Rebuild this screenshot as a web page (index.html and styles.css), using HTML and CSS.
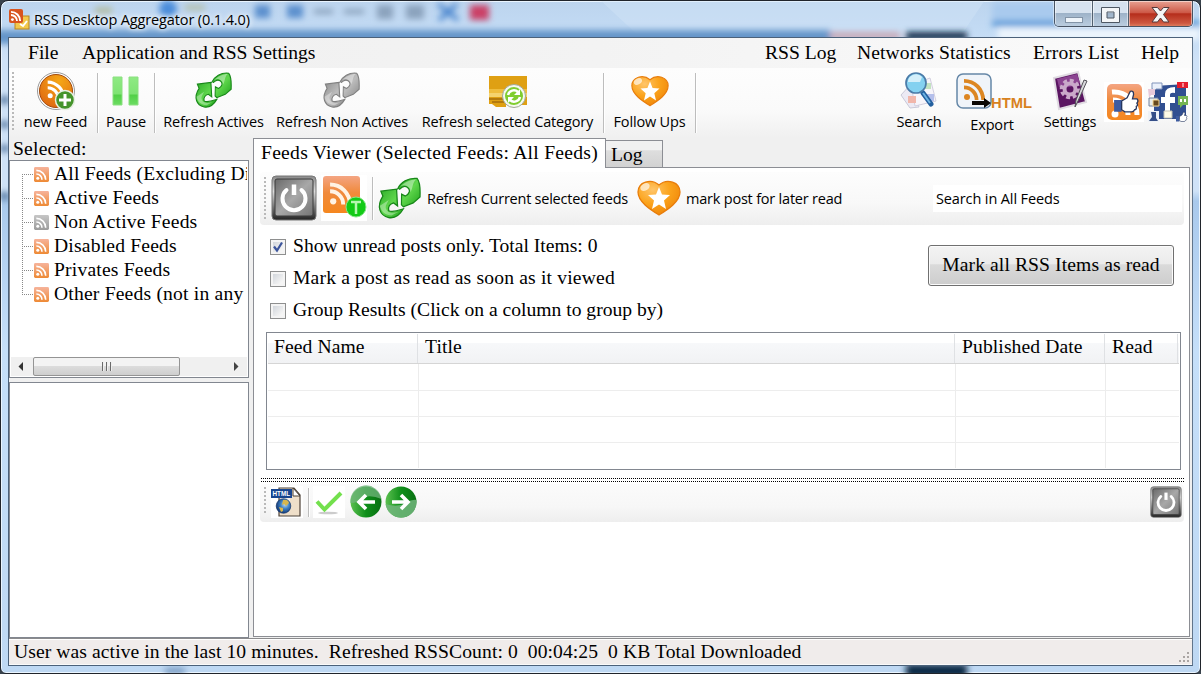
FILE: index.html
```html
<!DOCTYPE html>
<html lang="en">
<head>
<meta charset="utf-8">
<title>RSS Desktop Aggregator (0.1.4.0)</title>
<link rel="stylesheet" href="styles.css">
</head>
<body>
<svg class="defs" width="0" height="0" aria-hidden="true">
  <defs>
    <linearGradient id="gGreen" x1="0" y1="0" x2="1" y2="1"><stop offset="0" stop-color="#2fae2a"/><stop offset=".5" stop-color="#5fd64c"/><stop offset="1" stop-color="#20a51c"/></linearGradient>
    <linearGradient id="gGrey" x1="0" y1="0" x2="1" y2="1"><stop offset="0" stop-color="#909090"/><stop offset=".5" stop-color="#bcbcbc"/><stop offset="1" stop-color="#8c8c8c"/></linearGradient>
    <linearGradient id="gOrange" x1="0" y1="0" x2="0" y2="1"><stop offset="0" stop-color="#f4a583"/><stop offset=".45" stop-color="#f08a3c"/><stop offset="1" stop-color="#f5871f"/></linearGradient>
    <linearGradient id="gTree" x1="0" y1="0" x2="0" y2="1"><stop offset="0" stop-color="#f6b39b"/><stop offset="1" stop-color="#ee8a35"/></linearGradient>
    <linearGradient id="gTreeGrey" x1="0" y1="0" x2="0" y2="1"><stop offset="0" stop-color="#c6c6c6"/><stop offset="1" stop-color="#9c9c9c"/></linearGradient>
    <linearGradient id="gMetal" x1="0" y1="0" x2="1" y2="1"><stop offset="0" stop-color="#6a6a6a"/><stop offset=".5" stop-color="#a8a8a8"/><stop offset="1" stop-color="#747474"/></linearGradient>
    <linearGradient id="gRim" x1="0" y1="0" x2="0" y2="1"><stop offset="0" stop-color="#888"/><stop offset=".35" stop-color="#ddd"/><stop offset=".7" stop-color="#777"/><stop offset="1" stop-color="#222"/></linearGradient>
    <radialGradient id="gHeart" cx=".35" cy=".25" r=".8"><stop offset="0" stop-color="#ffc56a"/><stop offset=".5" stop-color="#fba41d"/><stop offset="1" stop-color="#ef8508"/></radialGradient>
    <linearGradient id="gPause" x1="0" y1="0" x2="0" y2="1"><stop offset="0" stop-color="#8fea84"/><stop offset=".6" stop-color="#7fe373"/><stop offset=".65" stop-color="#52d047"/><stop offset="1" stop-color="#6cdc62"/></linearGradient>
    <linearGradient id="gBall" x1="0" y1="0" x2="1" y2="0"><stop offset="0" stop-color="#5cc050"/><stop offset=".5" stop-color="#0f8f1a"/><stop offset="1" stop-color="#087012"/></linearGradient>
    <radialGradient id="gGlobe" cx=".6" cy=".4" r=".6"><stop offset="0" stop-color="#b8dcf5"/><stop offset=".5" stop-color="#3c7fc2"/><stop offset="1" stop-color="#143a78"/></radialGradient>
    <radialGradient id="gRound" cx=".6" cy=".2" r=".9"><stop offset="0" stop-color="#f5a716"/><stop offset="1" stop-color="#de6410"/></radialGradient>
    <symbol id="waves" viewBox="0 0 20 20">
      <circle cx="4" cy="16" r="2.4"/><path d="M1.6 9.8v-3A11.6 11.6 0 0 1 13.2 18.4h-3A8.6 8.6 0 0 0 1.6 9.8zM1.6 4.600V1.500A16.900 16.900 0 0 1 18.500 18.400h-3.100A13.800 13.800 0 0 0 1.600 4.600z"/>
    </symbol>
    <symbol id="swirl" viewBox="0 0 45 45">
      <path d="M21 13C24 6 32 1 41 2C45 7 44 16 44 21L37 27L27 31L25 29L25 18L29 20C33 18 35 14 31 11C28 9 25 11 23 13z"/>
      <path d="M24 10C28 6 34 3 40 3C36 6 37 12 34 16C35 12 31 9 27 9z" fill="#fff" fill-opacity=".4" stroke="none"/>
      <path d="M4 15L20 13L21 30L17 27C13 28 11 31 12 35C16 37 21 35 27 33C23 40 18 43 12 42C3 40 -1 31 6 20z"/>
      <path d="M3 30C4 36 9 40 15 40L22 36C14 39 8 36 9 30L12 24z" fill="#fff" fill-opacity=".35" stroke="none"/>
      <path d="M21.500 13L24 17L23 31" fill="none" stroke="#fff" stroke-width="1.200"/>
    </symbol>
    <symbol id="heart" viewBox="0 0 44 36">
      <path d="M22 35C14 30 1 22 1 12C1 2 14-2 22 5C30-2 43 2 43 12C43 22 30 30 22 35z" fill="url(#gHeart)" stroke="#e87d0c" stroke-width="1.300"/>
      <ellipse cx="8" cy="7" rx="5" ry="3.500" fill="#fff" opacity=".65" transform="rotate(-30 8 7)"/>
      <path d="M22 7L25 14.500L33 15L27 20.500L29 29L22 24.500L15 29L17 20.500L11 15L19 14.500z" fill="#fff"/>
    </symbol>
    <symbol id="power" viewBox="0 0 46 46">
      <rect x="1" y="1" width="44" height="44" rx="4" fill="url(#gRim)" stroke="#777"/>
      <rect x="4" y="4" width="38" height="37" rx="2" fill="url(#gMetal)" stroke="#3b3b3b"/>
      <path d="M15.500 15A11.500 11.500 0 1 0 30.500 15" fill="none" stroke="#fff" stroke-width="4" stroke-linecap="round"/>
      <path d="M23 9.500V20" stroke="#fff" stroke-width="4.500"/>
    </symbol>
    <symbol id="feed" viewBox="0 0 16 16">
      <rect width="16" height="16" rx="1.500"/>
      <g fill="none" stroke="#fff" stroke-width="1.700"><path d="M2.500 7.500A6 6 0 0 1 8.500 13.500M2.500 3.600A10 10 0 0 1 12.500 13.500"/></g><circle cx="4" cy="12" r="1.600" fill="#fff"/>
    </symbol>
    <symbol id="hand" viewBox="0 0 24 22">
      <path d="M1 10H8V21H1z" fill="#3d5ba0"/><path d="M8 11L13 8L16 2Q19 1 19 5L18 9H22Q24 11 22 13Q23.500 15 21.500 16Q22 19 20 19Q19 21 17 21H11L8 19z" fill="#fff" stroke="#26375f" stroke-width="1.200"/>
    </symbol>
  </defs>
</svg>

<div class="window">
  <svg class="glass" viewBox="0 0 1201 674" aria-hidden="true">
    <defs><filter id="soft" x="-5%" y="-50%" width="110%" height="200%"><feGaussianBlur stdDeviation="3"/></filter></defs>
    <path d="M600 0H985L960 37H640z" fill="#d4e5f8" opacity=".4"/>
    <g filter="url(#soft)">
      <path d="M-20 30H830V44H-20z" fill="#6595c9"/>
      <path d="M830 32H900V40H830z" fill="#c7a9b7"/>
      <path d="M906 32H967V40H906z" fill="#0d2947"/>
      <path d="M992 2H1060V22H992z" fill="#a9caee"/><path d="M992 21H1200V26H992z" fill="#3e90d4"/><path d="M998 28H1200V40H998z" fill="#edf5fd"/>
      <circle cx="168" cy="9" r="9" fill="#4b8ddb"/><path d="M95 7H112V14H95zM185 5h20v5h-20z" fill="#b3bda4"/>
      <path d="M255 5H270V18H255zM287 5H303V18H287z" fill="#5b90ce"/>
      <path d="M314 9H333V14H314zM344 9H364V14H344zM377 5H393V19H377zM406 5H424V19H406z" fill="#8ba3bd"/>
      <path d="M438 4L458 20M457 4L439 20" stroke="#3f7fcb" stroke-width="4"/>
      <path d="M470 5H489V20H470z" fill="#cb3f66"/>
      <path d="M0 96h9v8H0zM0 121h9v7H0zM0 145h9v7H0zM0 192h9v8H0z" fill="#5b7da4"/>
      <path d="M906 664H967V678H906z" fill="#0d2947"/><path d="M165 668h20v6h-20z" fill="#7596bd"/>
    </g>
  </svg>

  <header class="titlebar">
    <svg class="app-icon" viewBox="0 0 21 21"><rect x="6" y="7" width="14" height="13" fill="#f2c94c" stroke="#b98620"/><path d="M11 15l3 2 4-5" fill="none" stroke="#fff" stroke-width="2"/><rect width="14" height="14" rx="2" fill="#d8541f"/><use href="#waves" x="1" y="1" width="12" height="12" fill="#fff"/></svg>
    <h1 class="caption">RSS Desktop Aggregator (0.1.4.0)</h1>
    <div class="controls">
      <span class="control minimize"><svg viewBox="0 0 38 26"><rect x="10.500" y="16.500" width="17" height="5" fill="#eef4fa" stroke="#8394a7"/></svg></span>
      <span class="control maximize"><svg viewBox="0 0 36 26"><path d="M8.500 6.500h18v15h-18zM14 11v6h7v-6z" fill="#f4f6f8" fill-rule="evenodd" stroke="#4e5864"/></svg></span>
      <span class="control close"><svg viewBox="0 0 62 26"><path d="M23 6.500h5.500L31.500 10l3-3.500H40L34.500 13.500L40 21h-5.500l-3-4-3 4H23l5.500-7.500z" fill="#f5f5f5" stroke="#55393b"/></svg></span>
    </div>
  </header>

  <main class="client">
    <nav class="menu">
      <span class="m-file">File</span><span class="m-app">Application and RSS Settings</span>
      <span class="m-log">RSS Log</span><span class="m-net">Networks Statistics</span><span class="m-err">Errors List</span><span class="m-help">Help</span>
    </nav>

    <div class="toolbar">
      <i class="grip"></i>
      <button class="tool t-new"><svg viewBox="0 0 40 40"><circle cx="20" cy="20" r="18.500" fill="#fff" stroke="#999"/><circle cx="20" cy="20" r="16.500" fill="url(#gRound)" stroke="#a34a0d"/><use href="#waves" x="10" y="8" width="21" height="21" fill="#fff"/><circle cx="29" cy="29" r="9.500" fill="#45942b" stroke="#e7efe2" stroke-width="1.500"/><path d="M29 23v12M23 29h12" stroke="#fff" stroke-width="3"/></svg><span>new Feed</span></button>
      <i class="sep"></i>
      <button class="tool t-pause"><svg viewBox="0 0 40 40"><path d="M7 6h9v28H7zM23 6h9v28h-9z" fill="url(#gPause)" stroke="#8be080"/></svg><span>Pause</span></button>
      <i class="sep"></i>
      <button class="tool t-act"><svg viewBox="0 0 40 40" fill="url(#gGreen)" stroke="#188719" stroke-width="1.300"><use href="#swirl" x="0" y="0" width="38" height="39"/></svg><span>Refresh Actives</span></button>
      <button class="tool t-non"><svg viewBox="0 0 40 40" fill="url(#gGrey)" stroke="#808080" stroke-width="1.300"><use href="#swirl" x="0" y="0" width="38" height="39"/></svg><span>Refresh Non Actives</span></button>
      <button class="tool t-cat"><svg viewBox="0 0 40 40"><path d="M1 5H39V34H18V36H8L4 33H1z" fill="#dfa013"/><path d="M1 18H39V25H1z" fill="#efbd3d"/><path d="M1 22H39V26H1z" fill="#f5d36e"/><path d="M1 28H22M4 31H20" stroke="#a66d0c" stroke-width="1.500"/><circle cx="26" cy="25" r="11.500" fill="#f5f9ef" stroke="#a1a796"/><circle cx="26" cy="25" r="9" fill="#80cd30"/><path d="M20 24a6 6 0 0 1 10-3M32 26a6 6 0 0 1-10 3" fill="none" stroke="#fff" stroke-width="2.500"/><path d="M32 18v6h-6zM20 32v-6h6z" fill="#fff"/></svg><span>Refresh selected Category</span></button>
      <i class="sep"></i>
      <button class="tool t-follow"><svg viewBox="0 0 40 40"><use href="#heart" x="1" y="4" width="38" height="32"/></svg><span>Follow Ups</span></button>
      <i class="sep"></i>
      <button class="tool t-search"><svg viewBox="0 0 40 40"><path d="M2 24L12 13L20 36L11 37z" fill="#eceaf4" stroke="#c9c9d8"/><path d="M12 14L31 7L37 30L16 35z" fill="#f7f5fa" stroke="#d2cfdf"/><path d="M9 25h8v7H9z" fill="#f1b6aa"/><path d="M24 12h8v6h-8z" fill="#c3e3c0"/><path d="M28 23h7v7h-7z" fill="#b4bfeb"/><path d="M24 22l8 11" stroke="#235f9e" stroke-width="5" stroke-linecap="round"/><path d="M24 22l7 10" stroke="#6eb2e2" stroke-width="2"/><circle cx="17" cy="12" r="10" fill="#84d1f0" stroke="#4b7ba8" stroke-width="1.700"/><path d="M9 11a8 8 0 0 1 14-5l-2 5z" fill="#fff" opacity=".65"/></svg><span>Search</span></button>
      <button class="tool t-export"><svg viewBox="0 0 77 37"><rect x="1" y="1" width="34" height="34" rx="6" fill="#f0f4f9" stroke="#6587a7" stroke-width="1.500"/><use href="#waves" x="6" y="4" width="25" height="25" fill="#dc8622"/><path d="M16 28H28V25L35 30L28 35V32H16z" fill="#0b0703"/><text class="html-word" x="35" y="34.500" textLength="41" lengthAdjust="spacingAndGlyphs">HTML</text></svg><span>Export</span></button>
      <button class="tool t-settings"><svg viewBox="0 0 40 40"><path d="M4 7L28 1L36 31L9 38z" fill="#5b1562" stroke="#e0dce2" stroke-width="2"/><path d="M7 8L27 3L30 12Q18 18 9 16z" fill="#8b4491"/><circle cx="20" cy="18" r="8" fill="none" stroke="#caa9ca" stroke-width="4.500" stroke-dasharray="3.700 2.500"/><circle cx="20" cy="18" r="5.500" fill="none" stroke="#caa9ca" stroke-width="4"/><path d="M37 10L28 30L25 36L26 29L34 9z" fill="#d9d9dc" stroke="#525057"/></svg><span>Settings</span></button>
      <button class="picture t-like"><svg viewBox="0 0 40 40"><path d="M0 0h40v40H0z" fill="#fff"/><rect x="3" y="2" width="35" height="36" rx="5" fill="url(#gOrange)"/><path d="M8 10A23 23 0 0 1 33 33M9 18A15 15 0 0 1 24 33" stroke="#fff" stroke-width="5" fill="none"/><circle cx="11" cy="32" r="3.500" fill="#fff"/><use href="#hand" x="9" y="7" width="26" height="24"/></svg></button>
      <button class="picture t-social"><svg viewBox="0 0 40 40"><path d="M6 4L38 2V37H6z" fill="#314f91"/><path d="M17 34V21H13V15H17V12Q17 5 27 5V11Q22 10 22 13V15H27V21H22V34z" fill="#fff"/><path d="M4 1h10v6H8l-3 3V7H4z" fill="#eaf0fa" stroke="#8093ba"/><path d="M0 7h7v6H3l-2 3z" fill="#e7c9d9"/><path d="M29 0h11v6H29z" fill="#e51d2d"/><path d="M35 1v4" stroke="#fff"/><path d="M30 14h10v9h-5l-3 3v-3h-2z" fill="#75b553"/><path d="M33 17v3M37 17v3" stroke="#fff" stroke-width="2"/><path d="M1 16h9v8H1z" fill="#e8ece9" stroke="#7180a0"/><path d="M5 18h6v6H5z" fill="#66491e" stroke="#f7d993"/><path d="M0 29h11v11H0z" fill="#eef2f7"/><path d="M3 30h5v6l2 3H1l3-4z" fill="#354f88"/><path d="M16 29h8v7h-8z" fill="#fffbe6" stroke="#c3c2b6"/><use href="#hand" x="27" y="29" width="13" height="11"/></svg></button>
    </div>

    <div class="workspace">
      <aside class="sidebar">
        <h2 class="selected">Selected:</h2>
        <section class="tree-box">
          <ul class="tree">
            <li><svg class="leaf" fill="url(#gTree)"><use href="#feed"/></svg><span>All Feeds (Excluding Disabled)</span></li>
            <li><svg class="leaf" fill="url(#gTree)"><use href="#feed"/></svg><span>Active Feeds</span></li>
            <li><svg class="leaf" fill="url(#gTreeGrey)"><use href="#feed"/></svg><span>Non Active Feeds</span></li>
            <li><svg class="leaf" fill="url(#gTree)"><use href="#feed"/></svg><span>Disabled Feeds</span></li>
            <li><svg class="leaf" fill="url(#gTree)"><use href="#feed"/></svg><span>Privates Feeds</span></li>
            <li><svg class="leaf" fill="url(#gTree)"><use href="#feed"/></svg><span>Other Feeds (not in any category)</span></li>
          </ul>
          <div class="scrollbar">
            <svg class="arrow" viewBox="0 0 22 19"><path d="M12 5v9L7.500 9.500z" fill="#333"/></svg>
            <div class="thumb"><i></i><i></i><i></i></div>
            <svg class="arrow last" viewBox="0 0 22 19"><path d="M9 5v9l4.500-4.500z" fill="#444"/></svg>
          </div>
        </section>
        <section class="detail-box"></section>
      </aside>

      <section class="tabs">
        <div class="tab-row"><span class="tab active">Feeds Viewer (Selected Feeds: All Feeds)</span><span class="tab">Log</span></div>
        <div class="page">
          <div class="feedbar">
            <i class="grip"></i>
            <svg class="f-power"><use href="#power"/></svg>
            <svg class="f-rss" viewBox="0 0 46 46"><path d="M0 0h46v46H0z" fill="#fff"/><rect x="2" y="1" width="37" height="37" rx="3" fill="url(#gOrange)"/><use href="#waves" x="7" y="5" width="26" height="27" fill="#fff3e4"/><circle cx="35" cy="32" r="10" fill="#12ca16" stroke="#86e58a"/><path d="M30 27h10M35 27v12" stroke="#b5f7b0" stroke-width="2.500"/></svg>
            <i class="sep"></i>
            <svg class="f-swirl" fill="url(#gGreen)" stroke="#188719" stroke-width="1.300"><use href="#swirl"/></svg>
            <span class="f-refresh">Refresh Current selected feeds</span>
            <svg class="f-heart"><use href="#heart"/></svg>
            <span class="f-mark">mark post for later read</span>
            <div class="search">Search in All Feeds</div>
          </div>

          <div class="options">
            <div class="checks">
              <label><i class="box"><svg viewBox="0 0 14 14"><path d="M3 6.500L6 10.500L11 2.500" fill="none" stroke="#3c559c" stroke-width="2.200"/></svg></i><span class="c1">Show unread posts only. Total Items: 0</span></label>
              <label><i class="box"></i><span class="c2">Mark a post as read as soon as it viewed</span></label>
              <label><i class="box"></i><span class="c3">Group Results (Click on a column to group by)</span></label>
            </div>
            <button class="mark-all">Mark all RSS Items as read</button>
          </div>

          <div class="grid">
            <div class="grid-head"><span>Feed Name</span><span>Title</span><span>Published Date</span><span>Read</span></div>
            <div class="grid-row"><i></i><i></i><i></i><i></i></div>
            <div class="grid-row"><i></i><i></i><i></i><i></i></div>
            <div class="grid-row"><i></i><i></i><i></i><i></i></div>
            <div class="grid-row"><i></i><i></i><i></i><i></i></div>
          </div>
          <div class="splitter"></div>

          <div class="postbar">
            <i class="grip"></i>
            <svg class="p-html" viewBox="0 0 32 32"><path d="M0 0h32v32H0z" fill="#fff"/><path d="M8 2h15l6 7v21H8z" fill="#efdfc9" stroke="#4d4238" stroke-width="1.200"/><path d="M9 3h10v20H9z" fill="#fff" opacity=".6"/><path d="M22 2v8h7z" fill="#fff" stroke="#4d4238"/><path d="M0 3h21v9H0z" fill="#174590"/><text class="html-tag" x="1.500" y="10" textLength="17.500" lengthAdjust="spacingAndGlyphs">HTML</text><circle cx="12.500" cy="20" r="7.300" fill="url(#gGlobe)" stroke="#173768" stroke-width=".7"/><path d="M12 14q5-1 6 3l-3 3-2-2-2 1zM8 21l4 1v3l-2 1z" fill="#d7b74d"/></svg>
            <i class="sep"></i>
            <svg class="p-check" viewBox="0 0 32 32"><path d="M0 0h32v32H0z" fill="#fff"/><ellipse cx="15" cy="27" rx="10" ry="1.300" fill="#ccc"/><path d="M4 15.500L11.500 23.500L28 7" fill="none" stroke="#73e04d" stroke-width="4"/></svg>
            <svg class="p-prev" viewBox="0 0 32 32"><circle cx="16" cy="16" r="15.500" fill="url(#gBall)"/><path d="M.5 17A15.500 15.500 0 0 1 31.500 13Q20 8 12 12Q8 17 .5 17z" fill="#72b67c" opacity=".75"/><path d="M25 16H10M16 9L9 16L16 23" fill="none" stroke="#fff" stroke-width="3.600"/></svg>
            <svg class="p-next" viewBox="0 0 32 32"><circle cx="16" cy="16" r="15.500" fill="url(#gBall)"/><path d="M.5 18Q12 22 21 17Q27 13 31.500 14A15.500 15.500 0 0 1 .5 18z" fill="#72b67c" opacity=".85"/><path d="M7 16H22M16 9L23 16L16 23" fill="none" stroke="#fff" stroke-width="3.600"/></svg>
            <svg class="p-power"><use href="#power"/></svg>
          </div>
        </div>
      </section>
    </div>

    <footer class="status"><span>User was active in the last 10 minutes.&nbsp; Refreshed RSSCount: 0&nbsp; 00:04:25&nbsp; 0 KB Total Downloaded</span>
      <svg class="sizer" viewBox="0 0 11 11"><path d="M8 0h2v2H8zM4 4h2v2H4zM8 4h2v2H8zM0 8h2v2H0zM4 8h2v2H4zM8 8h2v2H8z" fill="#aaa5a3"/></svg>
    </footer>
  </main>
</div>
</body>
</html>
```
FILE: styles.css
```css
* { box-sizing: border-box; }
body { margin: 0; overflow: hidden; background: #39434d; color: #000; font: 19.600px/24px "Liberation Serif", serif; }
.defs { position: absolute; }
svg { display: block; flex: none; overflow: visible; }
h1, h2, ul { margin: 0; padding: 0; font: inherit; }
button { font: inherit; color: inherit; padding: 0; border: 0; background: none; }
span, .search, .caption, .mark-all { white-space: nowrap; }

.window { position: relative; width: 1201px; height: 674px; padding: 0 8px; border: 1px solid #20242b; border-radius: 8px 8px 6px 6px; overflow: hidden; background: linear-gradient(#bcd4ee, #c3dbf4 30px, #cfe2f7 60px, #cfe2f7 190px, #a9c9ec 200px, #c5dff9 350px, #bed8f3); box-shadow: inset 0 0 0 1px #eaf5ff; display: flex; flex-direction: column; }
.glass { position: absolute; left: -1px; top: -1px; width: 1201px; height: 674px; }

.titlebar { position: relative; height: 36px; flex: none; display: flex; align-items: flex-start; }
.app-icon { width: 21px; height: 21px; margin-top: 8px; }
.caption { margin: 7px 0 0 4px; font: 14.500px/23px "Open Sans", sans-serif; letter-spacing: -.130px; text-shadow: 0 0 7px #fff, 0 0 5px #fff; }
.controls { display: flex; margin: 0 -1px 0 auto; height: 26px; border: 1px solid #485363; border-top: 0; border-radius: 0 0 5px 5px; overflow: hidden; box-shadow: 0 0 0 1px #e6f0fa99; }
.control { height: 26px; border-right: 1px solid #52606f; background: linear-gradient(#d6e2ef 0 45%, #9db2c8 47%, #bdcfe1); box-shadow: inset 0 0 0 1px #ffffff80; }
.minimize { width: 38px; }
.maximize { width: 36px; }
.close { width: 63px; border: 0; background: linear-gradient(#e8a192, #cc5745 46%, #b52d1b 49%, #cd5740 85%, #e28765); }
.control svg { height: 26px; }

.client { position: relative; width: 1185px; height: 629px; flex: none; margin-left: -1px; border: 1px solid #4b617a; border-right-color: #61758b; background: #f0f0f0; display: flex; flex-direction: column; }
.menu { height: 30px; display: flex; align-items: center; padding-left: 19px; background: linear-gradient(90deg, #f0f0f0, #f3f3f3 50%, #fbfbfb); }
.m-file { width: 54px; }
.m-app { width: 683px; }
.m-log { width: 92px; }
.m-net { width: 176px; letter-spacing: .1px; }
.m-err { width: 108px; letter-spacing: .15px; }

.toolbar { height: 70px; display: flex; align-items: flex-start; padding-left: 3px; background: linear-gradient(#fdfdfd, #fafafa 60%, #f0f0f0); font: 14.500px/20px "Open Sans", sans-serif; letter-spacing: -.170px; }
.grip { width: 2px; height: 58px; margin-top: 4px; background: repeating-linear-gradient(#b9b9b9 0 2px, transparent 2px 4px); }
.sep { width: 1px; height: 60px; margin-top: 5px; background: #bdbdbd; box-shadow: 1px 0 #fff; }
.tool { display: flex; flex-direction: column; align-items: center; height: 68px; padding-top: 3px; gap: 1px; flex: none; letter-spacing: inherit; }
.tool > svg { width: 40px; height: 40px; }
.t-new { width: 83px; }
.t-pause { width: 56px; }
.t-act { width: 117px; }
.t-non { width: 140px; }
.t-cat { width: 191px; }
.t-follow { width: 91px; }
.t-search { width: 60px; margin-left: 193px; }
.t-export { width: 77px; margin-left: 7px; }
.tool.t-export > svg { width: 77px; height: 37px; margin: 2px 0 4px; }
.t-export span { margin-right: 5px; }
.t-settings { width: 60px; margin-left: 7px; }
.picture { width: 40px; height: 40px; margin: 14px 0 0 4px; }
.html-word { font: bold 14px "Liberation Sans", sans-serif; fill: #d8821e; letter-spacing: 0; }

.workspace { display: flex; height: 500px; gap: 4px; }
.sidebar { width: 240px; flex: none; display: flex; flex-direction: column; }
.selected { height: 22px; padding: 0 0 0 4px; line-height: 21px; letter-spacing: .200px; }
.tree-box { height: 218px; border: 1px solid #828790; background: #fff; overflow: hidden; display: flex; flex-direction: column; }
.tree { list-style: none; padding: 1px 0 0 12px; letter-spacing: .190px; }
.tree li { position: relative; height: 24px; display: flex; align-items: center; padding-left: 12px; background: repeating-linear-gradient(90deg, #888 0 1px, transparent 1px 2px) 0 12px / 11px 1px no-repeat, repeating-linear-gradient(#888 0 1px, transparent 1px 2px) 0 0 / 1px 24px no-repeat; }
.tree li:first-child { background-position: 0 12px, 0 12px; }
.tree li:last-child { background-size: 11px 1px, 1px 12px; }
.tree span { width: 193px; overflow: hidden; flex: none; }
.leaf { width: 15px; height: 15px; margin-right: 5px; }
.scrollbar { height: 19px; margin: auto 1px 1px; background: #f0f0f0; display: flex; }
.arrow { width: 22px; height: 19px; }
.last { margin-left: auto; }
.thumb { width: 147px; height: 19px; border: 1px solid #949494; border-radius: 2px; background: linear-gradient(#f3f3f3 0 45%, #dcdcdc 50%, #cecece); display: flex; justify-content: center; align-items: center; gap: 2px; }
.thumb i { width: 2px; height: 9px; background: #6b6b6b; border-right: 1px solid #eee; }
.detail-box { height: 256px; margin-top: 4px; border: 1px solid #828790; background: #fff; }

.tabs { width: 938px; display: flex; flex-direction: column; }
.tab-row { position: relative; z-index: 1; height: 30px; display: flex; align-items: flex-end; }
.tab { width: 57px; height: 27px; margin-bottom: 1px; border: 1px solid #8c8e94; border-left: 0; border-bottom: 0; padding-left: 5px; line-height: 27px; background: linear-gradient(#f1f1f1 0 35%, #dedede 37%, #d2d2d2); }
.tab.active { width: 353px; height: 30px; margin: 0; border-left: 1px solid #8c8e94; padding-left: 7px; line-height: 27px; background: #fff; letter-spacing: .260px; }
.page { width: 937px; height: 470px; margin-top: -1px; padding: 4px 6px; border: 1px solid #8c8e94; background: #fff; }
.feedbar { height: 53px; width: 924px; display: flex; align-items: center; padding: 0 2px 1px 4px; border-radius: 4px; background: linear-gradient(#fdfdfd, #f8f8f8 60%, #eee); font: 14.500px/20px "Open Sans", sans-serif; letter-spacing: -.210px; }
.feedbar .grip { height: 42px; margin: 0 5px 0 0; }
.f-power { width: 46px; height: 46px; }
.f-rss { width: 46px; height: 46px; margin: 0 5px 0 4px; }
.feedbar .sep { height: 43px; margin: 0; }
.f-swirl { width: 44px; height: 45px; margin: 0 6px 0 4px; }
.f-refresh { width: 210px; padding-top: 1px; letter-spacing: -.240px; }
.f-heart { width: 44px; height: 36px; margin-right: 5px; }
.f-mark { width: 247px; padding-top: 1px; }
.search { width: 249px; height: 27px; padding: 4px 3px; background: #fff; letter-spacing: -.120px; }

.options { height: 107px; display: flex; justify-content: space-between; padding: 6px 9px 0 10px; }
.checks label { display: flex; align-items: center; height: 32px; gap: 7px; }
.checks span { padding-bottom: 2px; }
.c2 { letter-spacing: .170px; }
.box { width: 16px; height: 16px; border: 1px solid #8e8f8f; background: linear-gradient(135deg, #c9ced5, #f5f5f5 75%); box-shadow: inset 0 0 0 2px #f4f4f4; flex: none; }
.mark-all { width: 246px; height: 41px; margin-top: 14px; padding-bottom: 2px; border: 1px solid #707070; border-radius: 3px; background: linear-gradient(#f3f3f3, #ebebeb 46%, #dadada 48%, #cdcdcd); box-shadow: inset 0 0 0 1px #fbfbfb; letter-spacing: .100px; }

.grid { width: 915px; height: 138px; margin-left: 6px; border: 1px solid #828790; padding: 1px; }
.grid-head, .grid-row { display: grid; grid-template-columns: 151px 537px 150px 73px; }
.grid-head { height: 30px; border-bottom: 1px solid #d5d5d5; background: linear-gradient(#fff 0 30%, #f7f8fa 32%, #f1f2f4); }
.grid-head span { margin-right: 1px; padding-left: 6px; line-height: 26px; border-right: 1px solid #dfe1e4; letter-spacing: .100px; }
.grid-row { height: 26px; border-bottom: 1px solid #ededed; }
.grid-row i { border-right: 1px solid #ececec; }
.grid-row i:last-child, .grid-row:last-child { border-color: transparent; }
.grid-row:nth-child(2) { height: 27px; }
.splitter { width: 924px; height: 4px; margin: 8px 0 2px; background: repeating-linear-gradient(90deg, #000 0 1px, transparent 1px 2px) 1px 0 / 100% 1px no-repeat, repeating-linear-gradient(90deg, #000 0 1px, transparent 1px 2px) 1px 3px / 100% 1px no-repeat; }
.postbar { height: 38px; width: 924px; display: flex; padding: 2px 2px 0 4px; border-radius: 4px; background: linear-gradient(#fbfbfb, #f7f7f7 60%, #eee); }
.postbar > svg { width: 32px; height: 32px; }
.postbar .grip { height: 27px; margin: 1px 5px 0 0; }
.postbar .sep { height: 29px; margin: 2px 4px 0 5px; }
.postbar > .p-prev { margin-left: 5px; }
.postbar > .p-next { margin-left: 3px; }
.postbar > .p-power { margin-left: auto; }
.html-tag { font: bold 7px "Liberation Sans", sans-serif; fill: #fff; }

.status { height: 27px; display: flex; justify-content: space-between; padding-left: 5px; border-top: 1px solid #8b8b8d; border-bottom: 1px solid #fafafa; box-shadow: inset 0 1px #fff; background: #f0eceb; line-height: 26px; letter-spacing: .086px; }
.sizer { width: 11px; height: 11px; margin: 13px 2px 0 0; }
```
